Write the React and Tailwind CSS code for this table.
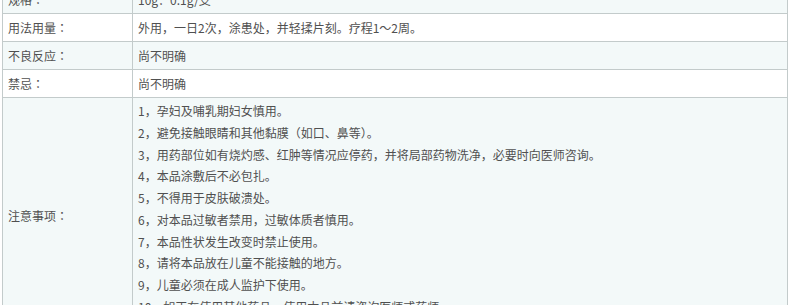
export default function App() {
  const notes = [
    "1，孕妇及哺乳期妇女慎用。",
    "2，避免接触眼睛和其他黏膜（如口、鼻等）。",
    "3，用药部位如有烧灼感、红肿等情况应停药，并将局部药物洗净，必要时向医师咨询。",
    "4，本品涂敷后不必包扎。",
    "5，不得用于皮肤破溃处。",
    "6，对本品过敏者禁用，过敏体质者慎用。",
    "7，本品性状发生改变时禁止使用。",
    "8，请将本品放在儿童不能接触的地方。",
    "9，儿童必须在成人监护下使用。",
    "10，如正在使用其他药品，使用本品前请咨询医师或药师。",
  ];
  const rows = [
    { k: "规格", v: "10g：0.1g/支", bg: "bg-[#f3f9f9]" },
    { k: "用法用量", v: "外用，一日2次，涂患处，并轻揉片刻。疗程1～2周。", bg: "bg-white" },
    { k: "不良反应", v: "尚不明确", bg: "bg-[#f3f9f9]" },
    { k: "禁忌", v: "尚不明确", bg: "bg-white" },
  ];
  const Colon = () => (
    <span style={{ fontFamily: '"Noto Sans CJK TC", sans-serif' }}>：</span>
  );
  return (
    <div className="w-[790px] h-[305px] overflow-hidden bg-white">
      <table
        className="ml-[2px] mt-[-15px] w-[786px] border-collapse text-[12px] text-[#505050]"
        style={{ fontFamily: '"Noto Sans CJK SC", "Noto Sans", sans-serif' }}
      >
        <tbody>
          {rows.map((r, i) => (
            <tr key={i} className={r.bg}>
              <td className="w-[130px] h-[28px] border border-[#c3cbcb] pl-[5px] leading-[20px]">
                {r.k}
                <Colon />
              </td>
              <td className="h-[28px] border border-[#c3cbcb] pl-[5px] leading-[20px]">{r.v}</td>
            </tr>
          ))}
          <tr className="bg-[#f3f9f9]">
            <td className="w-[130px] border border-[#c3cbcb] pl-[5px] align-middle">
              注意事项
              <Colon />
            </td>
            <td className="border border-[#c3cbcb] pl-[5px] pt-[2px] pb-[16px]">
              {notes.map((n, i) => (
                <div key={i} className="leading-[21.75px]">{n}</div>
              ))}
            </td>
          </tr>
        </tbody>
      </table>
    </div>
  );
}
